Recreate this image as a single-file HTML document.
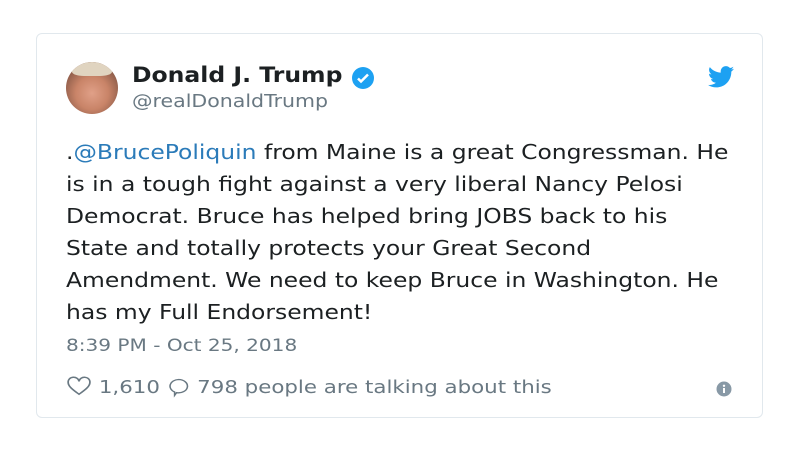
<!DOCTYPE html>
<html><head><meta charset="utf-8"><style>
body{margin:0;width:800px;height:467px;background:#fff;font-family:"DejaVu Sans","Liberation Sans",sans-serif;position:relative;overflow:hidden}
.card{position:absolute;left:36px;top:33px;width:727px;height:385px;border:1px solid #e1e8ed;border-radius:6px;box-sizing:border-box}
.av{position:absolute;left:66px;top:62px;width:52px;height:52px;border-radius:50%;background:radial-gradient(circle at 50% 60%,#e0a088 0,#c98468 40%,#8a5a48 75%);overflow:hidden}
.hair{position:absolute;left:6px;top:0;width:40px;height:14px;background:#e0d4c0;border-radius:50% 50% 30% 30%}
.s{transform:scaleX(1.17);transform-origin:0 0;white-space:nowrap;position:absolute}
.name{left:132px;top:63px;font-size:21px;font-weight:bold;color:#1c2022;transform:scaleX(1.12)}
.handle{left:132px;top:91px;font-size:18px;color:#697882;transform:scaleX(1.14)}
.text{left:66px;top:136px;font-size:20.5px;line-height:32px;color:#1c2022;transform:scaleX(1.143)}
.text a{color:#2b7bb9}
.time{left:66px;top:336px;font-size:17px;color:#697882;transform:scaleX(1.18)}
.foot{left:66px;top:375px;font-size:18px;color:#697882;transform:scaleX(1.185)}
</style></head><body>
<div class="card"></div>
<div class="av"><div class="hair"></div></div>
<div class="s name">Donald J. Trump</div>
<svg style="position:absolute;left:351px;top:66px" width="24" height="24" viewBox="0 0 24 24"><circle cx="12" cy="12" r="11" fill="#1da1f2"/><path d="M7 12.5l3 3 7-7" stroke="#fff" stroke-width="2.5" fill="none"/></svg>
<div class="s handle">@realDonaldTrump</div>
<svg style="position:absolute;left:708px;top:66px" width="26" height="22" viewBox="0 0 24 20"><path fill="#1da1f2" d="M24 2.4c-.9.4-1.8.7-2.8.8 1-.6 1.8-1.6 2.2-2.7-1 .6-2 1-3.1 1.2C19.3.7 18 0 16.6 0c-2.7 0-4.9 2.2-4.9 4.9 0 .4 0 .8.1 1.1C7.7 5.8 4.1 3.9 1.7.9c-.4.7-.7 1.6-.7 2.5 0 1.7.9 3.2 2.2 4.1-.8 0-1.6-.2-2.2-.6v.1c0 2.4 1.7 4.4 3.9 4.8-.4.1-.8.2-1.3.2-.3 0-.6 0-.9-.1.6 2 2.4 3.4 4.6 3.4-1.7 1.3-3.8 2.1-6.1 2.1-.4 0-.8 0-1.2-.1C2.2 18.8 4.8 19.6 7.5 19.6c9.1 0 14-7.5 14-14v-.6c1-.7 1.8-1.6 2.5-2.6z"/></svg>
<div class="s text">.<a>@BrucePoliquin</a> from Maine is a great Congressman. He<br>is in a tough fight against a very liberal Nancy Pelosi<br>Democrat. Bruce has helped bring JOBS back to his<br>State and totally protects your Great Second<br>Amendment. We need to keep Bruce in Washington. He<br>has my Full Endorsement!</div>
<div class="s time">8:39 PM - Oct 25, 2018</div>
<div class="s foot"><svg width="22" height="22" viewBox="0 0 24 22" style="vertical-align:-4px"><path d="M12 20C5 14 2 11 2 7a5 5 0 0 1 10-1 5 5 0 0 1 10 1c0 4-3 7-10 13z" fill="none" stroke="#697882" stroke-width="1.6"/></svg> 1,610 <svg width="20" height="24" viewBox="0 0 24 24" style="vertical-align:-6px"><path d="M12 3a9 8 0 1 1-2 15.8L8 22v-4A9 8 0 0 1 12 3z" fill="none" stroke="#697882" stroke-width="1.6"/></svg> 798 people are talking about this</div>
<svg style="position:absolute;left:716px;top:381px" width="16" height="16" viewBox="0 0 16 16"><circle cx="8" cy="8" r="7.5" fill="#8899a6"/><rect x="7" y="7" width="2" height="5" fill="#fff"/><circle cx="8" cy="4.8" r="1.2" fill="#fff"/></svg>
</body></html>
